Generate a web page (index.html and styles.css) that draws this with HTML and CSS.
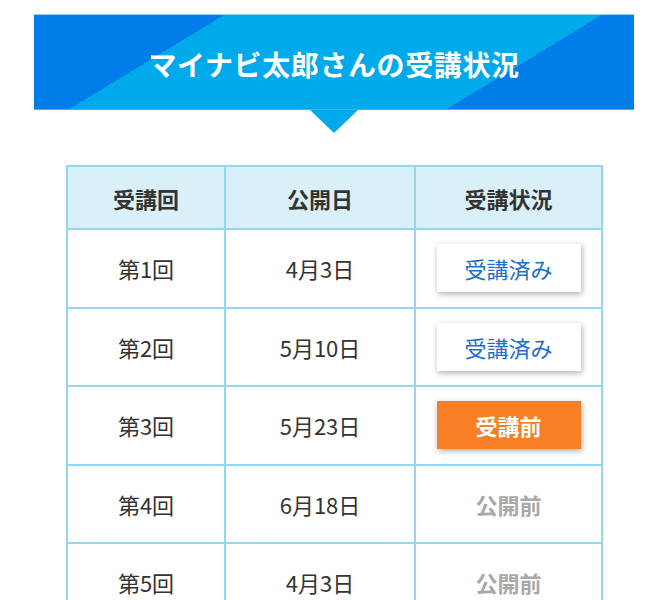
FILE: index.html
```html
<!DOCTYPE html>
<html lang="ja">
<head>
<meta charset="utf-8">
<title>受講状況</title>
<link rel="stylesheet" href="styles.css">
</head>
<body>
<div class="page">
  <div class="banner">
    <h1 class="banner-title">マイナビ太郎さんの受講状況</h1>
  </div>
  <table class="status-table">
    <colgroup>
      <col class="col-no">
      <col class="col-date">
      <col class="col-status">
    </colgroup>
    <thead>
      <tr>
        <th>受講回</th>
        <th>公開日</th>
        <th>受講状況</th>
      </tr>
    </thead>
    <tbody>
      <tr>
        <td>第1回</td>
        <td>4月3日</td>
        <td><span class="btn btn-done">受講済み</span></td>
      </tr>
      <tr>
        <td>第2回</td>
        <td>5月10日</td>
        <td><span class="btn btn-done">受講済み</span></td>
      </tr>
      <tr>
        <td>第3回</td>
        <td>5月23日</td>
        <td><span class="btn btn-todo">受講前</span></td>
      </tr>
      <tr>
        <td>第4回</td>
        <td>6月18日</td>
        <td><span class="pending">公開前</span></td>
      </tr>
      <tr>
        <td>第5回</td>
        <td>4月3日</td>
        <td><span class="pending">公開前</span></td>
      </tr>
    </tbody>
  </table>
</div>
</body>
</html>
```

FILE: styles.css
```css
html, body {
  margin: 0;
  padding: 0;
  background: #ffffff;
}

body {
  font-family: "Noto Sans CJK JP", "Noto Sans", sans-serif;
  color: #333333;
}

.page {
  width: 600px;
  margin-left: 34px;
  padding-top: 14px;
  padding-bottom: 40px;
}

.banner {
  position: relative;
  height: 94px;
  border-top: 1px solid #86d2f6;
  border-bottom: 1px solid #38b6f0;
  background: linear-gradient(148.7deg, #007de8 25.2%, #00aaea 25.2%, #00aaea 75.2%, #007de8 75.2%);
  display: flex;
  align-items: center;
  justify-content: center;
}

.banner::after {
  content: "";
  position: absolute;
  left: 50%;
  top: 100%;
  margin-left: -24px;
  margin-top: 1px;
  border-left: 24px solid transparent;
  border-right: 24px solid transparent;
  border-top: 23px solid #00aaea;
}

.banner-title {
  margin: 0;
  padding-top: 4px;
  color: #ffffff;
  font-size: 28px;
  font-weight: 700;
  letter-spacing: 0.6px;
  line-height: 1;
}

.status-table {
  margin: 55px 0 0 32px;
  width: 535px;
  border-collapse: collapse;
  table-layout: fixed;
}

.col-no { width: 158px; }
.col-date { width: 190px; }
.col-status { width: 187px; }

.status-table th,
.status-table td {
  border: 2px solid #92d7f0;
  text-align: center;
  vertical-align: middle;
  font-size: 22px;
  padding: 0;
}

.status-table th {
  height: 61px;
  background: #d9f0f8;
  font-weight: 700;
  color: #333333;
}

.status-table td {
  height: 76.5px;
  font-weight: 400;
}

.btn {
  display: inline-flex;
  align-items: center;
  justify-content: center;
  width: 144px;
  height: 48px;
  box-shadow: 1px 2px 6px rgba(0, 0, 0, 0.32);
  font-size: 22px;
  line-height: 1;
  vertical-align: middle;
}

.btn-done {
  background: #ffffff;
  color: #1a6fd0;
  font-weight: 400;
}

.btn-todo {
  background: #f77f26;
  color: #ffffff;
  font-weight: 700;
}

.pending {
  color: #a8a8a8;
  font-weight: 700;
}
```
